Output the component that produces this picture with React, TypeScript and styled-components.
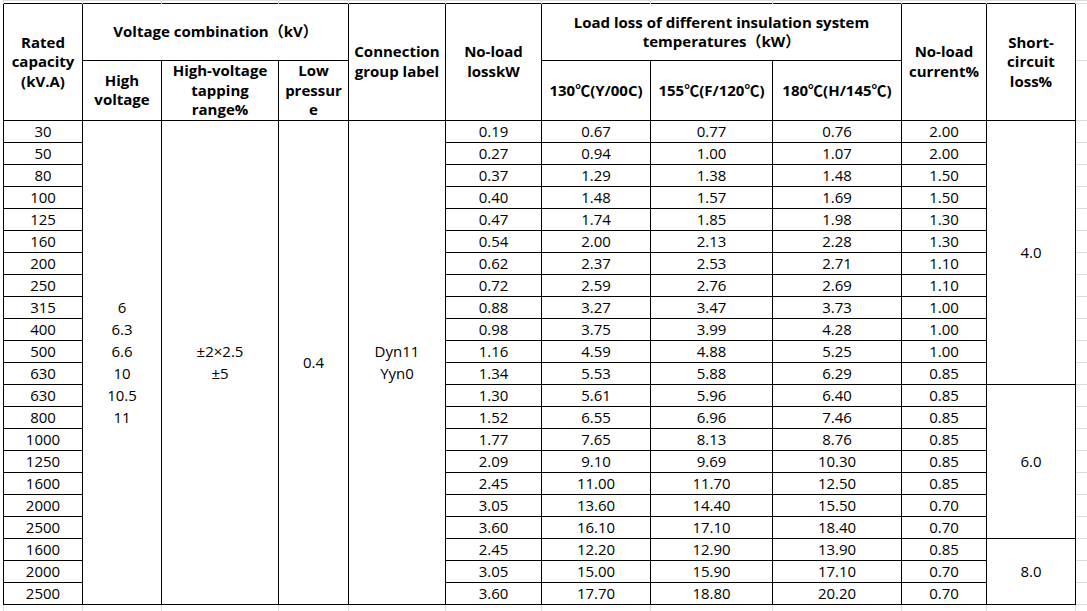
import React from "react";
import styled, { createGlobalStyle } from "styled-components";

const GlobalStyle = createGlobalStyle`
  html, body {
    margin: 0;
    padding: 0;
    background: #ffffff;
    overflow: hidden;
  }
  body {
    font-family: "Open Sans", "Noto Sans CJK SC", sans-serif;
    color: #000000;
  }
`;

const Page = styled.div`
  padding: 0 0 0 3px;
  width: 1087px;
  height: 611px;
  box-sizing: border-box;
  overflow: hidden;
`;

const Sheet = styled.table`
  border-collapse: collapse;
  table-layout: fixed;
  width: 1092px;
  font-size: 15px;
`;

const Col = styled.col<{ $w: number }>`
  width: ${(p) => p.$w}px;
`;

const Row = styled.tr<{ $h: number }>`
  height: ${(p) => p.$h}px;
`;

const HeadCell = styled.th`
  border: 1px solid #000000;
  padding: 0 2px;
  font-weight: 700;
  font-size: 15px;
  line-height: 19.5px;
  text-align: center;
  vertical-align: middle;
  white-space: nowrap;
`;

const Cell = styled.td<{ $lines?: boolean }>`
  border: 1px solid #000000;
  padding: 0 2px;
  font-size: 15px;
  line-height: ${(p) => (p.$lines ? 22 : 20)}px;
  text-align: center;
  vertical-align: middle;
  white-space: nowrap;
`;

const GridCell = styled.td<{ $edge: "top" | "right" | "bottom" }>`
  padding: 0;
  line-height: 0;
  border-color: #dcdcdc;
  border-style: solid;
  border-width: ${(p) =>
    p.$edge === "top"
      ? "1px 1px 0 1px"
      : p.$edge === "bottom"
      ? "0 1px 0 1px"
      : "1px 0 1px 0"};
`;

const widths = [79, 79, 117, 70, 97, 96, 109, 122, 129, 85, 89, 20];

const rows: string[][] = [
  ["30", "0.19", "0.67", "0.77", "0.76", "2.00"],
  ["50", "0.27", "0.94", "1.00", "1.07", "2.00"],
  ["80", "0.37", "1.29", "1.38", "1.48", "1.50"],
  ["100", "0.40", "1.48", "1.57", "1.69", "1.50"],
  ["125", "0.47", "1.74", "1.85", "1.98", "1.30"],
  ["160", "0.54", "2.00", "2.13", "2.28", "1.30"],
  ["200", "0.62", "2.37", "2.53", "2.71", "1.10"],
  ["250", "0.72", "2.59", "2.76", "2.69", "1.10"],
  ["315", "0.88", "3.27", "3.47", "3.73", "1.00"],
  ["400", "0.98", "3.75", "3.99", "4.28", "1.00"],
  ["500", "1.16", "4.59", "4.88", "5.25", "1.00"],
  ["630", "1.34", "5.53", "5.88", "6.29", "0.85"],
  ["630", "1.30", "5.61", "5.96", "6.40", "0.85"],
  ["800", "1.52", "6.55", "6.96", "7.46", "0.85"],
  ["1000", "1.77", "7.65", "8.13", "8.76", "0.85"],
  ["1250", "2.09", "9.10", "9.69", "10.30", "0.85"],
  ["1600", "2.45", "11.00", "11.70", "12.50", "0.85"],
  ["2000", "3.05", "13.60", "14.40", "15.50", "0.70"],
  ["2500", "3.60", "16.10", "17.10", "18.40", "0.70"],
  ["1600", "2.45", "12.20", "12.90", "13.90", "0.85"],
  ["2000", "3.05", "15.00", "15.90", "17.10", "0.70"],
  ["2500", "3.60", "17.70", "18.80", "20.20", "0.70"],
];

// short-circuit loss groups: start row -> [span, value]
const shortCircuit: Record<number, [number, string]> = {
  0: [12, "4.0"],
  12: [7, "6.0"],
  19: [3, "8.0"],
};

function Lines({ items }: { items: string[] }) {
  return (
    <>
      {items.map((t, i) => (
        <React.Fragment key={i}>
          {i > 0 && <br />}
          {t}
        </React.Fragment>
      ))}
    </>
  );
}

export default function App() {
  return (
    <Page>
      <GlobalStyle />
      <Sheet>
        <colgroup>
          {widths.map((w, i) => (
            <Col key={i} $w={w} />
          ))}
        </colgroup>
        <tbody>
          <Row $h={3}>
            {widths.map((_, i) => (
              <GridCell key={i} $edge="top" />
            ))}
          </Row>
          <Row $h={57}>
            <HeadCell rowSpan={2}>
              <Lines items={["Rated", "capacity", "(kV.A)"]} />
            </HeadCell>
            <HeadCell colSpan={3}>Voltage combination（kV）</HeadCell>
            <HeadCell rowSpan={2}>
              <Lines items={["Connection", "group label"]} />
            </HeadCell>
            <HeadCell rowSpan={2}>
              <Lines items={["No-load", "losskW"]} />
            </HeadCell>
            <HeadCell colSpan={3}>
              <Lines
                items={[
                  "Load loss of different insulation system",
                  "temperatures（kW）",
                ]}
              />
            </HeadCell>
            <HeadCell rowSpan={2}>
              <Lines items={["No-load", "current%"]} />
            </HeadCell>
            <HeadCell rowSpan={2}>
              <Lines items={["Short-", "circuit", "loss%"]} />
            </HeadCell>
            <GridCell $edge="right" />
          </Row>
          <Row $h={59}>
            <HeadCell>
              <Lines items={["High", "voltage"]} />
            </HeadCell>
            <HeadCell>
              <Lines items={["High-voltage", "tapping", "range%"]} />
            </HeadCell>
            <HeadCell>
              <Lines items={["Low", "pressur", "e"]} />
            </HeadCell>
            <HeadCell>130℃(Y/00C)</HeadCell>
            <HeadCell>155℃(F/120℃)</HeadCell>
            <HeadCell>180℃(H/145℃)</HeadCell>
            <GridCell $edge="right" />
          </Row>
          {rows.map((r, i) => (
            <Row $h={22} key={i}>
              <Cell>{r[0]}</Cell>
              {i === 0 && (
                <>
                  <Cell $lines rowSpan={rows.length}>
                    <Lines items={["6", "6.3", "6.6", "10", "10.5", "11"]} />
                  </Cell>
                  <Cell $lines rowSpan={rows.length}>
                    <Lines items={["±2×2.5", "±5"]} />
                  </Cell>
                  <Cell rowSpan={rows.length}>0.4</Cell>
                  <Cell $lines rowSpan={rows.length}>
                    <Lines items={["Dyn11", "Yyn0"]} />
                  </Cell>
                </>
              )}
              <Cell>{r[1]}</Cell>
              <Cell>{r[2]}</Cell>
              <Cell>{r[3]}</Cell>
              <Cell>{r[4]}</Cell>
              <Cell>{r[5]}</Cell>
              {shortCircuit[i] && (
                <Cell rowSpan={shortCircuit[i][0]}>{shortCircuit[i][1]}</Cell>
              )}
              <GridCell $edge="right" />
            </Row>
          ))}
          <Row $h={20}>
            {widths.map((_, i) => (
              <GridCell key={i} $edge="bottom" />
            ))}
          </Row>
        </tbody>
      </Sheet>
    </Page>
  );
}
